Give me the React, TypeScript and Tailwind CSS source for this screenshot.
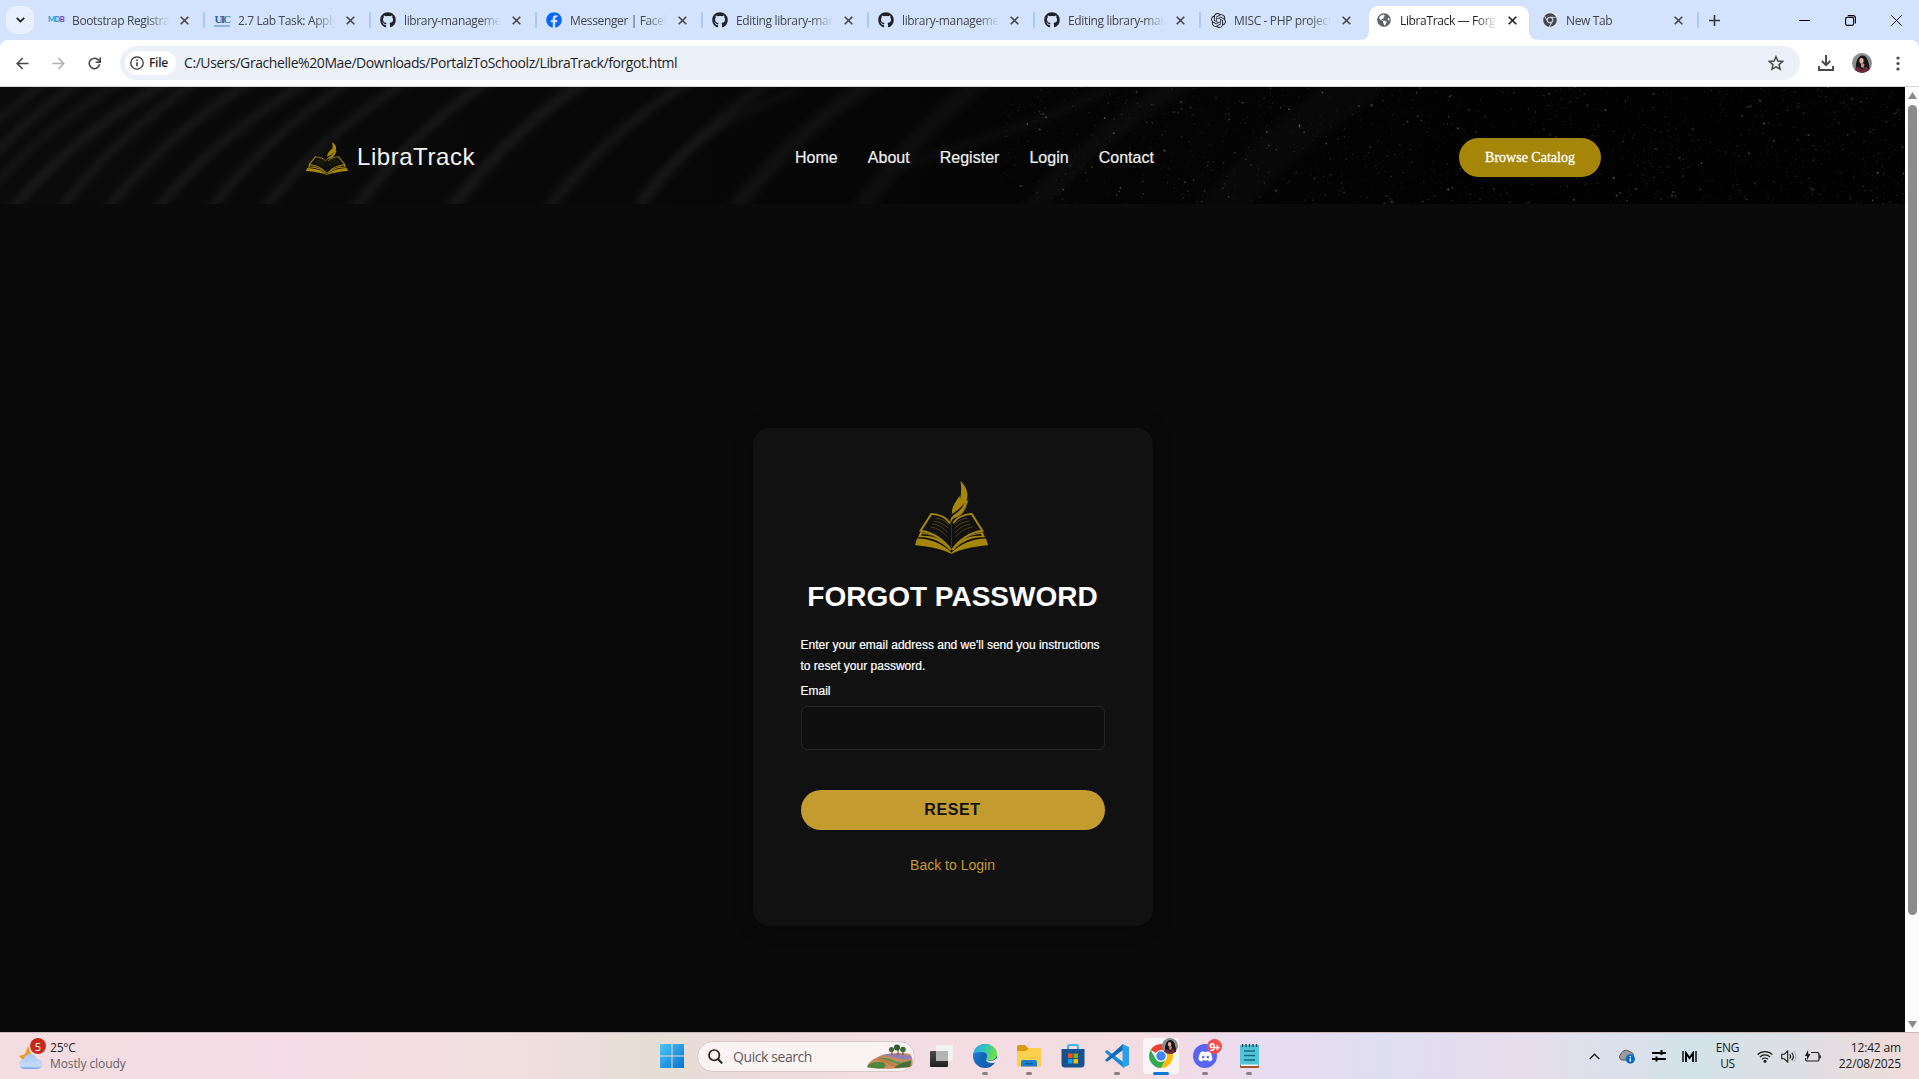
import React from "react";
import { FaGithub, FaFacebook, FaDiscord, FaChrome, FaGlobeAmericas } from "react-icons/fa";
import { SiOpenai } from "react-icons/si";

const UI = "font-['Open_Sans','Noto_Sans',sans-serif]";
const ARIAL = "font-['Liberation_Sans',Arial,sans-serif]";

function Close({ dark }: { dark?: boolean }) {
  return (
    <svg className={dark ? "size-[9px] text-[#1f1f1f]" : "size-[9px] text-[#474747]"} viewBox="0 0 9 9">
      <path d="M.7.7l7.6 7.6M8.3.7L.7 8.3" stroke="currentColor" strokeWidth="1.6" fill="none" />
    </svg>
  );
}

function MdbIcon() {
  return (
    <span className="block w-4 text-[7.5px] leading-4 font-black tracking-[-0.6px] text-[#3f8fe0] font-['Lato',sans-serif]">
      <span className="text-[#2aa5d8]">M</span>
      <span className="text-[#4180dd]">D</span>
      <span className="text-[#6a4fc8]">B</span>
    </span>
  );
}

function UicIcon() {
  return (
    <span className="flex w-4 flex-col items-center font-['Liberation_Serif',serif]">
      <span className="text-[11px] leading-[10px] font-bold tracking-[-1.8px] text-[#2460a8]">
        UI<span className="text-[#3c7a9c]">C</span>
      </span>
      <span className="mt-px h-[2px] w-4 bg-[#8db4e6]" />
    </span>
  );
}

type TabData = { title: string; icon: React.ReactNode; active?: boolean };

const tabs: TabData[] = [
  { title: "Bootstrap Registration", icon: <MdbIcon /> },
  { title: "2.7 Lab Task: Applying", icon: <UicIcon /> },
  { title: "library-management", icon: <FaGithub className="size-4 text-[#1f2328]" /> },
  { title: "Messenger | Facebook", icon: <FaFacebook className="size-4 text-[#0866ff]" /> },
  { title: "Editing library-management", icon: <FaGithub className="size-4 text-[#1f2328]" /> },
  { title: "library-management", icon: <FaGithub className="size-4 text-[#1f2328]" /> },
  { title: "Editing library-management", icon: <FaGithub className="size-4 text-[#1f2328]" /> },
  { title: "MISC - PHP project", icon: <SiOpenai className="size-[15px] text-[#1f2328]" /> },
  { title: "LibraTrack — Forgot", icon: <FaGlobeAmericas className="size-[14px] text-[#5f6368]" />, active: true },
  { title: "New Tab", icon: <FaChrome className="size-[14px] text-[#474747]" /> },
];

function Tab({ tab, sep }: { tab: TabData; sep: boolean }) {
  return (
    <div className="relative flex h-10 w-[166px] shrink-0 items-center pl-[9px]">
      {tab.active && (
        <svg className="absolute top-[6px] left-[-8px] h-[34px] w-[182px]" viewBox="0 0 182 34">
          <path d="M0 34C7 34 10 31 10 25V10C10 4 14 0 20 0H160C166 0 170 4 170 10V25C170 31 174 34 181 34Z" fill="#fff" />
        </svg>
      )}
      <span className="relative flex w-4 items-center justify-center">{tab.icon}</span>
      <span
        className={`relative ml-2 w-[98px] overflow-hidden pt-px text-[12px] leading-5 tracking-[-0.36px] whitespace-nowrap [mask-image:linear-gradient(to_right,#000_76px,transparent_97px)] ${
          tab.active ? "text-[#1f1f1f]" : "text-[#42464d]"
        }`}
      >
        {tab.title}
      </span>
      <span className="relative ml-[10px]">
        <Close dark={tab.active} />
      </span>
      {sep && <span className="absolute top-3 right-0 h-4 w-[2px] rounded bg-[#a8c7fa]" />}
    </div>
  );
}

function TabStrip() {
  return (
    <div className="flex h-10 items-center bg-[#d3e3fd]">
      <div className="flex h-full w-[39px] shrink-0 items-center pl-[6px]">
        <div className="flex size-7 items-center justify-center rounded-[10px] bg-[#e9f0fe]">
          <svg className="h-[6px] w-[9px]" viewBox="0 0 9 6">
            <path d="M.8.9L4.5 4.6 8.2.9" fill="none" stroke="#1f1f1f" strokeWidth="1.8" />
          </svg>
        </div>
      </div>
      {tabs.map((t, i) => (
        <Tab key={i} tab={t} sep={i !== 7 && i !== 8} />
      ))}
      <svg className="ml-[10px] size-[11px]" viewBox="0 0 11 11">
        <path d="M5.5 0v11M0 5.5h11" stroke="#333" strokeWidth="1.6" />
      </svg>
      <div className="ml-auto flex items-center pr-[17px]">
        <svg className="size-[11px]" viewBox="0 0 11 11">
          <path d="M0 5.500h11" stroke="#000" strokeWidth="1" />
        </svg>
        <svg className="ml-[35px] size-[11px]" viewBox="0 0 11 11">
          <rect x=".6" y="2.4" width="8" height="8" rx="1.6" fill="none" stroke="#000" strokeWidth="1.1" />
          <path d="M2.8.6H8A2.4 2.4 0 0 1 10.4 3v5.4" fill="none" stroke="#000" strokeWidth="1.1" />
        </svg>
        <svg className="ml-[35px] size-[11px]" viewBox="0 0 11 11">
          <path d="M.4.4l10.2 10.2M10.6.4L.4 10.6" stroke="#000" strokeWidth="1" />
        </svg>
      </div>
    </div>
  );
}

function Avatar({ className }: { className: string }) {
  return (
    <svg className={className} viewBox="0 0 20 20">
      <defs>
        <clipPath id="av">
          <circle cx="10" cy="10" r="10" />
        </clipPath>
      </defs>
      <g clipPath="url(#av)">
        <rect width="20" height="20" fill="#8b8d8e" />
        <path d="M4 17C3 11 5 3 10 2.500c5 0 6 5 7 9l1 7z" fill="#191516" />
        <ellipse cx="9.500" cy="7.800" rx="2.100" ry="2.800" fill="#e0b09f" />
        <path d="M9 10l3.500 1-1 4-2.500-1z" fill="#c98f82" />
        <path d="M2 20c0-5 3-6.500 5-6l3 3 3-3.500c3 1 5 3.500 5 6.500z" fill="#6a2a35" />
      </g>
    </svg>
  );
}

function Toolbar() {
  return (
    <div className="bg-[#d3e3fd]">
      <div className="flex h-[47px] items-center rounded-t-[8px] border-b border-[#d5d7da] bg-white pl-4">
        <svg className="size-[13px]" viewBox="0 0 13 13">
          <path d="M12.500 6.500H1.200M6.700 1L1.200 6.500l5.500 5.500" fill="none" stroke="#474747" strokeWidth="1.600" />
        </svg>
        <svg className="ml-[23px] size-[13px]" viewBox="0 0 13 13">
          <path d="M.5 6.500h11.300M6.300 1l5.500 5.500L6.300 12" fill="none" stroke="#b0b1b3" strokeWidth="1.600" />
        </svg>
        <svg className="ml-[23px] size-[13px]" viewBox="0 0 13 13">
          <path d="M11.600 7.200A5.200 5.200 0 1 1 10.500 3.100L12 4.700" fill="none" stroke="#474747" strokeWidth="1.600" />
          <path d="M12.200.6v4.600H7.600" fill="none" stroke="#474747" strokeWidth="1.600" />
        </svg>
        <div className="ml-[19px] flex h-[34px] w-[1680px] items-center rounded-full bg-[#ebf0f9] pl-[5px]">
          <div className="flex h-6 w-[51px] items-center rounded-full bg-white pl-[5px]">
            <svg className="size-[14px]" viewBox="0 0 14 14">
              <circle cx="7" cy="7" r="6.200" fill="none" stroke="#333" strokeWidth="1.300" />
              <path d="M7 6.300v4M7 3.600v1.500" stroke="#333" strokeWidth="1.500" />
            </svg>
            <span className="ml-[5px] text-[12px] font-semibold tracking-[-0.3px] text-[#1f1f1f]">File</span>
          </div>
          <span className="ml-2 text-[14px] leading-5 tracking-[-0.42px] whitespace-nowrap text-[#1f1f1f]">
            C:/Users/Grachelle%20Mae/Downloads/PortalzToSchoolz/LibraTrack/forgot.html
          </span>
          <svg className="mr-4 ml-auto size-4" viewBox="0 0 24 24">
            <path d="M12 2.500l2.800 6.600 7.200.6-5.500 4.700 1.700 7L12 17.700l-6.200 3.700 1.700-7L2 9.700l7.200-.6z" fill="none" stroke="#474747" strokeWidth="2.200" />
          </svg>
        </div>
        <svg className="ml-[18px] size-4" viewBox="0 0 16 16">
          <path d="M8 0v10M3.800 6L8 10.200 12.200 6M1 11v4h14v-4" fill="none" stroke="#474747" strokeWidth="1.900" />
        </svg>
        <Avatar className="ml-[18px] size-5" />
        <svg className="ml-[24px] h-[15px] w-1" viewBox="0 0 4 15">
          <circle cx="2" cy="2" r="1.600" fill="#474747" />
          <circle cx="2" cy="7.500" r="1.600" fill="#474747" />
          <circle cx="2" cy="13" r="1.600" fill="#474747" />
        </svg>
      </div>
    </div>
  );
}

function BookHalf() {
  return (
    <g>
      <path d="M50 98L17 150C52 154 88 178 108 208" fill="none" stroke="currentColor" strokeWidth="6" />
      <path d="M48 99C72 99 96 111 105 128" fill="none" stroke="currentColor" strokeWidth="5" />
      <path d="M16 154L9 170C52 166 88 188 109 214 88 180 56 160 16 154Z" fill="currentColor" />
      <path d="M22 159L18 165C42 164 60 168 78 179 60 167 42 161 22 159Z" fill="#111" />
      <path d="M6 173L0 194C44 198 84 206 110 220V216C84 188 46 174 6 173Z" fill="currentColor" />
      <g fill="none" stroke="currentColor" strokeWidth="2" opacity=".6">
        <path d="M62 112c14 1 28 7 38 18" />
        <path d="M57 121c16 1 31 9 42 21" />
        <path d="M52 130c18 1 34 11 46 25" />
        <path d="M47 139c20 2 38 14 50 29" />
      </g>
    </g>
  );
}

function BookLogo({ className }: { className: string }) {
  return (
    <svg className={className} viewBox="0 0 220 220" preserveAspectRatio="none">
      <BookHalf />
      <g transform="translate(220 0) scale(-1 1)">
        <BookHalf />
      </g>
      <path d="M110 128v72" stroke="currentColor" strokeWidth="2" opacity=".4" />
      <path
        d="M137 0C160 22 161 44 155 60L161 57C156 72 154 78 148 90 142 102 130 109 118 112 111 116 109 121 107 128 103 114 112 106 126 96 138 86 146 76 150 64 140 80 124 92 112 99 108 82 120 66 134 45L136 54C140 36 140 16 137 0Z"
        fill="currentColor"
      />
    </svg>
  );
}

// Diagonal ridges of the header backdrop: x at the bottom edge, x at the top edge, stroke width, brightness.
const ridges: [number, number, number, number][] = [
  [-75, 42, 6, 0.055], [-45, 75, 8, 0.05], [-20, 118, 7, 0.045], [20, 163, 9, 0.055], [68, 192, 8, 0.05],
  [115, 246, 8, 0.055], [165, 304, 9, 0.05], [218, 345, 8, 0.055], [272, 402, 9, 0.05], [362, 482, 10, 0.055],
  [458, 580, 12, 0.055], [555, 684, 11, 0.05], [645, 765, 11, 0.045], [742, 868, 16, 0.04], [868, 975, 18, 0.035],
  [1040, 1180, 20, 0.028], [1230, 1360, 40, 0.018],
];

function makeSpecks() {
  let s = 7;
  const rnd = () => {
    s = (s * 16807) % 2147483647;
    return s / 2147483647;
  };
  return Array.from({ length: 2200 }, () => {
    const x = 1905 - 905 * Math.pow(rnd(), 1.15);
    return { x, y: rnd() * 117, r: 0.4 + rnd() * 0.7, o: 0.04 + Math.pow(rnd(), 7) * 0.26 };
  });
}
const specks = makeSpecks();

function HeaderTexture() {
  return (
    <svg className="absolute inset-0 h-full w-full" viewBox="0 0 1905 117" preserveAspectRatio="none">
      <defs>
        <linearGradient id="base" x1="0" x2="1" y1="0" y2="0">
          <stop offset="0" stopColor="#0b0b0b" />
          <stop offset=".3" stopColor="#080808" />
          <stop offset=".55" stopColor="#040404" />
          <stop offset=".8" stopColor="#020202" />
        </linearGradient>
        <filter id="soft" x="-5%" y="-20%" width="110%" height="140%">
          <feGaussianBlur stdDeviation="3.5" />
        </filter>
      </defs>
      <rect width="1905" height="117" fill="url(#base)" />
      <g filter="url(#soft)" fill="none" stroke="#fff">
        {ridges.map(([b, t, w, o], i) => (
          <path
            key={i}
            d={`M${b - 14} 130C${b + 22} 84 ${b + (t - b) * 0.5} 38 ${t + 14} -12`}
            strokeWidth={w}
            strokeOpacity={o}
          />
        ))}
        <path d="M640 115C680 50 740 30 800 0M900 80C980 50 1040 40 1110 0" strokeWidth="8" strokeOpacity=".03" />
      </g>
      {specks.map((p, i) => (
        <circle key={i} cx={p.x} cy={p.y} r={p.r} fill="#fff" fillOpacity={p.o} />
      ))}
    </svg>
  );
}

function SiteHeader() {
  return (
    <header className="relative h-[117px] shrink-0 overflow-hidden">
      <HeaderTexture />
      <div className="relative flex h-full items-center pt-[24px] pr-[304px] pb-0 pl-[306px]">
        <div className="flex w-[489px] items-center">
          <BookLogo className="mt-px h-[33px] w-[42px] text-[#a68608]" />
          <span className="mb-[2px] ml-[9px] text-[24px] leading-8 tracking-[0.55px] text-[#f5f5f5]">LibraTrack</span>
        </div>
        <nav className="flex gap-[30px] text-[16px] leading-6 tracking-[0.02px] text-[#f0f0f0] [-webkit-text-stroke:0.2px_#f0f0f0]">
          <a>Home</a>
          <a>About</a>
          <a>Register</a>
          <a>Login</a>
          <a>Contact</a>
        </nav>
        <button className="ml-auto h-[39px] w-[142px] rounded-full bg-[#a68608] font-['Liberation_Serif','Times_New_Roman',serif] text-[14px] text-white [-webkit-text-stroke:0.3px_white]">
          Browse Catalog
        </button>
      </div>
    </header>
  );
}

function ForgotCard() {
  return (
    <main className="flex flex-1 justify-center pt-[224px]">
      <section className="flex h-[498px] w-[400px] flex-col items-center rounded-2xl bg-[#111111] px-12 pt-[53px] shadow-[0_0_20px_rgba(0,0,0,0.3)]">
        <BookLogo className="mr-[2px] h-[73px] w-[73px] shrink-0 text-[#a68608]" />
        <h1 className="mt-[22px] text-[28px] leading-[42px] font-bold whitespace-nowrap text-white">FORGOT PASSWORD</h1>
        <p className="mt-[17px] w-full text-[12px] leading-[21px] font-normal text-white [-webkit-text-stroke:0.2px_white]">
          Enter your email address and we'll send you instructions to reset your password.
        </p>
        <label className="mt-1 w-full text-[12px] leading-[21px] text-white [-webkit-text-stroke:0.2px_white]">Email</label>
        <input className="mt-1 h-11 w-[304px] shrink-0 rounded-md border border-[#262626] bg-[#0f0f0f]" />
        <button className="mt-10 h-10 w-[304px] shrink-0 rounded-full bg-[#c49b2e] text-[16px] font-bold tracking-[0.6px] text-[#111]">
          RESET
        </button>
        <a className="mt-[25px] text-[14px] leading-5 text-[#c49b2e]">Back to Login</a>
      </section>
    </main>
  );
}

function Scrollbar() {
  return (
    <div className="flex w-[14px] shrink-0 flex-col items-center bg-[#fcfcfc]">
      <svg className="mt-[5px] h-[7px] w-[9px]" viewBox="0 0 9 7">
        <path d="M4.500 0L9 7H0z" fill="#8b8b8b" />
      </svg>
      <div className="mt-[6px] h-[810px] w-[9px] rounded-full bg-[#8b8b8b]" />
      <svg className="mt-auto mb-[4px] h-[7px] w-[9px]" viewBox="0 0 9 7">
        <path d="M4.500 7L0 0h9z" fill="#8b8b8b" />
      </svg>
    </div>
  );
}

function Weather() {
  return (
    <div className="flex w-[659px] shrink-0 items-center pl-[18px]">
      <div className="relative h-[30px] w-8">
        <svg className="absolute top-[4px] left-0 h-[26px] w-[26px]" viewBox="0 0 26 26">
          <defs>
            <linearGradient id="cl" x1="0" y1="0" x2="0" y2="1">
              <stop offset="0" stopColor="#a9c6f4" />
              <stop offset=".8" stopColor="#c5dcfa" />
              <stop offset="1" stopColor="#6f9fe8" />
            </linearGradient>
          </defs>
          <path d="M1 11l6-2 3-8 3 8 3 3-7 5-4-2z" fill="#f09a28" />
          <path d="M6 24a5 5 0 0 1 0-10c1-6 11-7 13 0 7 0 7 10 0 10z" fill="url(#cl)" />
        </svg>
        <span className="absolute top-[-3px] left-3 flex size-4 items-center justify-center rounded-full bg-[#c42b1c] text-[11px] leading-none text-white">
          5
        </span>
      </div>
      <div className="text-[12px] leading-4">
        <div className="tracking-[-0.2px] text-[#222]">25°C</div>
        <div className="tracking-[-0.1px] text-[#666163]">Mostly cloudy</div>
      </div>
    </div>
  );
}

function SearchBox() {
  return (
    <div className="ml-[13px] flex h-[31px] w-[218px] shrink-0 items-center rounded-full border border-[#d5c9cc] bg-[#f9f3f4] pl-[10px]">
      <svg className="size-[15px]" viewBox="0 0 15 15">
        <circle cx="6.200" cy="6.200" r="5.200" fill="none" stroke="#222" strokeWidth="1.700" />
        <path d="M10 10l4.200 4.500" stroke="#222" strokeWidth="1.900" />
      </svg>
      <span className="ml-[10px] text-[14px] tracking-[-0.42px] text-[#5f5a5c]">Quick search</span>
      <svg className="mr-px ml-auto h-[25px] w-[47px]" viewBox="0 0 47 25">
        <path d="M1 23C3 16 10 14 16 11c8-2 18-3 28-1 3 3 3 9 2 12-5 3-36 4-45 1z" fill="#c98a5e" />
        <path d="M1 23c3-5 8-5 13-5s7 3 4 6c-6 1-13 0-17-1z" fill="#4f8441" />
        <path d="M8 16c7-2 12 0 17 3s9 2 20-3c1 3 0 6-3 7-8 1-13 0-18-2-5-3-10-5-16-5z" fill="#c7793f" />
        <path d="M11 14c8-1 14 1 18 3s9 2 15-1l1 2c-7 3-12 3-17 1s-10-4-17-5z" fill="#5f8f4a" />
        <path d="M16 11c9-2 18-1 29 1v3c-8 2-16-2-29-4z" fill="#8f80b8" />
        <path d="M28 24c4-4 11-6 17-7l-1 6z" fill="#3d6f3a" />
        <path d="M26 11V4M32 11V3M37 11V5" stroke="#6b4226" strokeWidth="1" />
        <circle cx="25.500" cy="5.500" r="2.600" fill="#3e6d39" />
        <circle cx="31" cy="3.500" r="3" fill="#2f5b2e" />
        <circle cx="37" cy="5.500" r="2.800" fill="#3b6b38" />
      </svg>
    </div>
  );
}

function Slot({ children, mark }: { children: React.ReactNode; mark?: boolean }) {
  return (
    <div className="relative flex h-full w-11 shrink-0 items-center justify-center">
      {children}
      {mark && <span className="absolute bottom-[4px] h-[3px] w-[6px] rounded-full bg-[#8a7f83]" />}
    </div>
  );
}

function TaskIcons() {
  return (
    <>
      <Slot>
        <svg className="size-6" viewBox="0 0 24 24">
          <defs>
            <linearGradient id="tv" x1="0" y1="0" x2="0" y2="1">
              <stop offset="0" stopColor="#4a4a4a" />
              <stop offset="1" stopColor="#1f1f1f" />
            </linearGradient>
          </defs>
          <rect x="7" y="1" width="17" height="16" rx="1" fill="#f2f2f2" />
          <rect x="1" y="7" width="18" height="16" rx="1" fill="url(#tv)" />
          <rect x="7" y="7" width="12" height="10" fill="#b4b4b4" />
        </svg>
      </Slot>
      <Slot mark>
        <svg className="size-6" viewBox="0 0 24 24">
          <defs>
            <linearGradient id="e1" x1="0" y1="0" x2="1" y2=".3">
              <stop offset="0" stopColor="#2aa6e4" />
              <stop offset=".5" stopColor="#33c3c0" />
              <stop offset="1" stopColor="#6be04a" />
            </linearGradient>
            <linearGradient id="e2" x1="0" y1="0" x2="1" y2="1">
              <stop offset="0" stopColor="#1a86dc" />
              <stop offset="1" stopColor="#0f4f9e" />
            </linearGradient>
          </defs>
          <circle cx="12" cy="12" r="12" fill="url(#e2)" />
          <path d="M.3 10C1.500 3.500 6.500 0 12 0c7 0 12 4.500 12 10 0 4-3 6.500-6.500 6.500-3 0-4.500-1-4-2.200 1.500-2 1-6.300-4-6.300C6 8 3 8 .3 10z" fill="url(#e1)" />
          <path d="M9.500 9.500c-3 3-2 9.500 3.500 11.500 4 1 7-.5 9.500-3.200-3 1.200-6.500 1.200-9-.6-2.500-2-2.500-4.700-.5-6.300-.8-1.300-2-1.800-3.500-1.400z" fill="#1265b5" />
          <path d="M13.200 14.600c-.6 1.400 1.300 2.400 4.300 2.400 2.500 0 4.500-1 6-3l.8 3.500-2 1c-3 1-6 .8-8.300-1-1-1-1.200-2-.8-2.900z" fill="#f0dfe4" />
        </svg>
      </Slot>
      <Slot mark>
        <svg className="size-6" viewBox="0 0 24 24">
          <path d="M0 3a2 2 0 0 1 2-2h6l3 3h11v6H0z" fill="#d99a12" />
          <path d="M0 7h9l3-3h10.500A1.500 1.500 0 0 1 24 5.500v16a1 1 0 0 1-1 1H1a1 1 0 0 1-1-1z" fill="#fccf4d" />
          <path d="M4 22.500V18a2 2 0 0 1 2-2h12a2 2 0 0 1 2 2v4.500z" fill="#1a7fd4" />
          <path d="M8 19h8v1.500H8z" fill="#0e5ba6" />
        </svg>
      </Slot>
      <Slot>
        <svg className="size-6" viewBox="0 0 24 24">
          <path d="M7 6V2.500A1.500 1.500 0 0 1 8.500 1h7A1.500 1.500 0 0 1 17 2.500V6" fill="none" stroke="#38b6ee" strokeWidth="2" />
          <path d="M.5 5h23v15a3.500 3.500 0 0 1-3.500 3.500H4A3.500 3.500 0 0 1 .5 20z" fill="#17518f" />
          <rect x="7" y="9.500" width="4.500" height="4.500" fill="#f25022" />
          <rect x="12.500" y="9.500" width="4.500" height="4.500" fill="#7fba00" />
          <rect x="7" y="15" width="4.500" height="4.500" fill="#00a4ef" />
          <rect x="12.500" y="15" width="4.500" height="4.500" fill="#ffb900" />
        </svg>
      </Slot>
      <Slot mark>
        <svg className="size-6" viewBox="0 0 24 24">
          <path d="M0 8l2-1.800 16 12V23z" fill="#0b76c4" />
          <path d="M0 8l18 15v-5L2 6.200z" fill="#1e8ad6" />
          <path d="M0 16l2 1.800L18 6V0z" fill="#0a6ab8" />
          <path d="M17.500 0L24 3v18l-6.500 3z" fill="#2aa0ec" />
        </svg>
      </Slot>
      <div className="relative flex h-full w-11 shrink-0 items-center justify-center">
        <div className="flex h-[38px] w-[38px] items-center justify-center rounded-[4px] border border-[#eedde1] bg-[#fbf4f6]">
          <svg className="size-6" viewBox="0 0 24 24">
            <circle cx="12" cy="12" r="12" fill="#fff" />
            <path d="M12 12L1.610 6A12 12 0 0 1 22.390 6H12z" fill="#ea4335" />
            <path d="M1.610 6A12 12 0 0 0 12 24l5.200-9L12 12 6.800 15z" fill="#34a853" />
            <path d="M22.390 6A12 12 0 0 1 12 24l5.200-9A6 6 0 0 0 12 6z" fill="#fbbc05" />
            <circle cx="12" cy="12" r="6" fill="#fff" />
            <circle cx="12" cy="12" r="4.700" fill="#4285f4" />
          </svg>
        </div>
        <Avatar className="absolute top-[5px] right-[5px] size-[16px]" />
        <span className="absolute bottom-[4px] h-[3px] w-4 rounded-full bg-[#0a78d4]" />
      </div>
      <Slot mark>
        <span className="flex size-6 items-center justify-center rounded-full bg-[#5865f2]">
          <FaDiscord className="size-[15px] text-white" />
        </span>
        <span className="absolute top-[6px] right-[5px] flex h-[15px] w-[15px] items-center justify-center rounded-full bg-[#f04f50] text-[10px] leading-none font-bold tracking-[-0.6px] text-white">
          9+
        </span>
      </Slot>
      <Slot mark>
        <svg className="h-6 w-[19px]" viewBox="0 0 19 24">
          <rect x="0" y="1" width="19" height="21" rx="1" fill="#52c4da" />
          <rect x="0" y="21" width="19" height="3" rx="1" fill="#a8532b" />
          <rect x="1" y="20.500" width="17" height="1.500" fill="#f7f7f7" />
          <path d="M2.500 0v3M6 0v3M9.500 0v3M13 0v3M16.500 0v3" stroke="#16495e" strokeWidth="1.400" />
          <path d="M4 7h11M4 11.500h11M4 16h11" stroke="#146a86" strokeWidth="1.500" />
        </svg>
      </Slot>
    </>
  );
}

function Tray() {
  return (
    <div className="ml-auto flex h-full shrink-0 items-center pr-[18px] text-[#1b1b1b]">
      <svg className="h-[7px] w-[11px]" viewBox="0 0 11 7">
        <path d="M.7 6L5.500 1.200 10.300 6" fill="none" stroke="#1b1b1b" strokeWidth="1.300" />
      </svg>
      <svg className="ml-[18px] h-[15px] w-[18px]" viewBox="0 0 18 15">
        <path d="M3.500 11A3.500 3.500 0 0 1 3 5C4 1 9.500 0 12 3c3 0 4 3 3 6l-4 2z" fill="#9c9c9c" stroke="#555" strokeWidth="1" />
        <circle cx="12.300" cy="10" r="4.700" fill="#0a6cc8" />
        <path d="M12.300 9.300v3.200M12.300 7v1.300" stroke="#fff" strokeWidth="1.300" />
      </svg>
      <svg className="ml-[16px] h-[12px] w-[14px]" viewBox="0 0 14 12">
        <path d="M0 3h14M0 9h14M9.500 0v5M4.500 6.500v5" stroke="#000" strokeWidth="2" fill="none" />
      </svg>
      <svg className="ml-[16px] h-[11px] w-[15px]" viewBox="0 0 15 11">
        <path d="M1 0v11M14 0v11" stroke="#000" strokeWidth="1.400" />
        <path d="M4 11V2l3.500 5L11 2v9" stroke="#000" strokeWidth="1.900" fill="none" />
      </svg>
      <div className="ml-[18px] w-[25px] text-center text-[12px] leading-4 tracking-[-0.3px] whitespace-nowrap">
        <div>ENG</div>
        <div>US</div>
      </div>
      <svg className="ml-[17px] h-[13px] w-4" viewBox="0 0 16 13">
        <path d="M.6 4.600a10.500 10.500 0 0 1 14.800 0M2.900 7a7.200 7.200 0 0 1 10.200 0M5.200 9.300a4 4 0 0 1 5.600 0" fill="none" stroke="#1b1b1b" strokeWidth="1.200" />
        <circle cx="8" cy="11.300" r="1.500" fill="#1b1b1b" />
      </svg>
      <svg className="ml-[8px] h-[13px] w-4" viewBox="0 0 16 13">
        <path d="M.7 4.300h2.500L6.700 1v11L3.200 8.800H.7z" fill="none" stroke="#1b1b1b" strokeWidth="1.100" />
        <path d="M8.700 4.300a3.300 3.300 0 0 1 0 4.400M10.700 2.600a6 6 0 0 1 0 7.800" fill="none" stroke="#1b1b1b" strokeWidth="1.100" />
        <path d="M12.800 1a8.500 8.500 0 0 1 0 11" fill="none" stroke="#aaa" strokeWidth="1" />
      </svg>
      <svg className="ml-[8px] h-[13px] w-4" viewBox="0 0 16 13">
        <path d="M6 2.500h6.500a1.500 1.500 0 0 1 1.500 1.500v5.500a1.500 1.500 0 0 1-1.500 1.500H2A1.500 1.500 0 0 1 .6 9.500V8" fill="none" stroke="#1b1b1b" strokeWidth="1.200" />
        <path d="M15 5.300v3" stroke="#1b1b1b" strokeWidth="1.600" />
        <path d="M3 0L0 6h2v4l3.500-6H3.300z" fill="#1b1b1b" />
      </svg>
      <div className="ml-[14px] w-[66px] text-right text-[12px] leading-4 tracking-[-0.15px] whitespace-nowrap">
        <div>12:42 am</div>
        <div>22/08/2025</div>
      </div>
    </div>
  );
}

function Taskbar() {
  return (
    <div className="flex h-[47px] shrink-0 items-center border-t border-[#c9b9bb] bg-[linear-gradient(to_right,#f2dde1_0%,#f5dce6_15%,#f1dfe0_25%,#e8ddd6_34%,#ecdcdc_40%,#f3dde5_47%,#f3dde0_55%,#f4dbe4_61%,#eadcf0_65%,#dfdef0_72%,#e6dded_79%,#dbe1ec_85%,#d3e3ea_88%,#dfdfe4_94%,#f1dbd8_100%)]">
      <Weather />
      <svg className="ml-px size-6 shrink-0" viewBox="0 0 24 24">
        <defs>
          <linearGradient id="win" x1="0" y1="0" x2="1" y2="1">
            <stop offset="0" stopColor="#4cc8f6" />
            <stop offset="1" stopColor="#0672cf" />
          </linearGradient>
        </defs>
        <path d="M0 0h11.500v11.500H0zM12.500 0H24v11.500H12.500zM0 12.500h11.500V24H0zM12.500 12.500H24V24H12.500z" fill="url(#win)" />
      </svg>
      <SearchBox />
      <div className="ml-[4px] flex h-full">
        <TaskIcons />
      </div>
      <Tray />
    </div>
  );
}

export default function App() {
  return (
    <div className={`flex h-[1079px] w-[1919px] flex-col overflow-hidden bg-[#0a0a0a] ${UI}`}>
      <TabStrip />
      <Toolbar />
      <div className="flex min-h-0 flex-1">
        <div className={`flex w-[1905px] flex-col bg-[#0a0a0a] ${ARIAL}`}>
          <SiteHeader />
          <ForgotCard />
        </div>
        <Scrollbar />
      </div>
      <Taskbar />
    </div>
  );
}
